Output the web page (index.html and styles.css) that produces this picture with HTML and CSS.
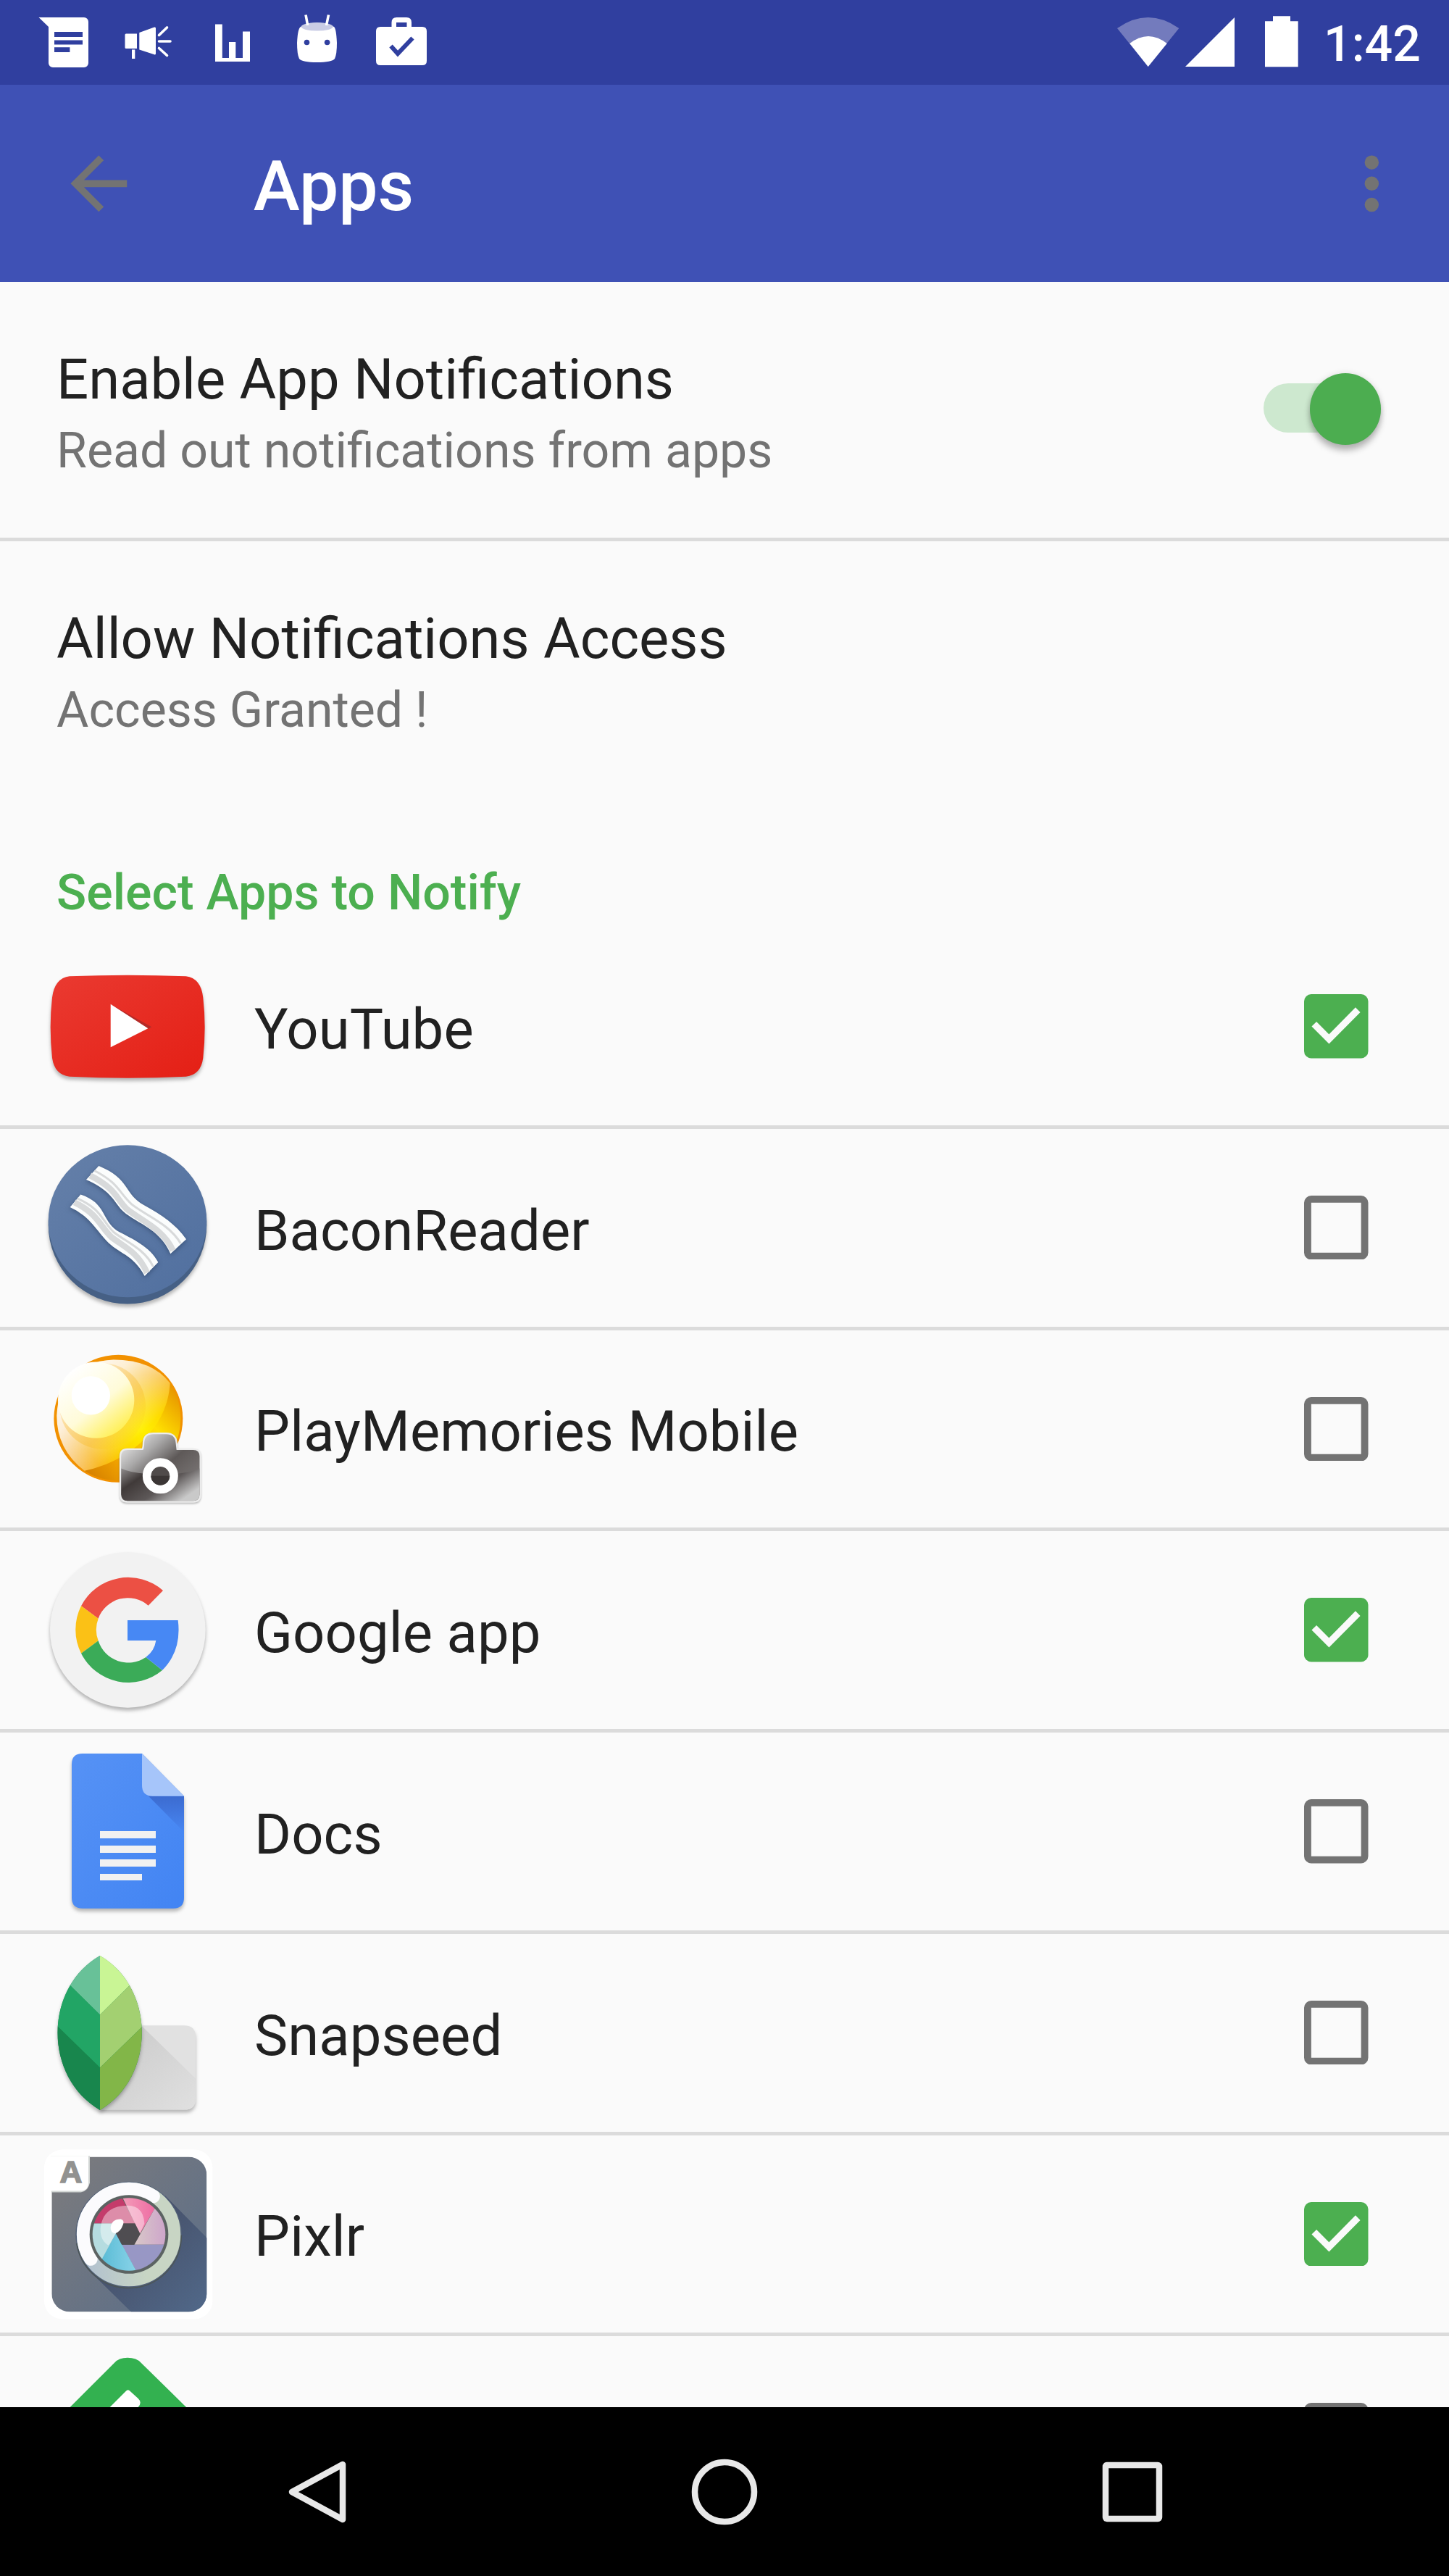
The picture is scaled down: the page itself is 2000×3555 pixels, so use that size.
FILE: index.html
```html
<!DOCTYPE html>
<html lang="en">
<head>
    <meta charset="UTF-8">
    <meta name="viewport" content="width=device-width, initial-scale=1.0">
    <title>Apps</title>
    <link rel="stylesheet" href="styles.css">
</head>
<body>
    <div class="status-bar">
        <svg class="status-left" viewBox="0 0 660 117">
            <!-- messages -->
            <path fill="#fff" d="M53.5 24H116a6 6 0 0 1 6 6V87a6 6 0 0 1-6 6H73a6 6 0 0 1-6-6V37Z"/>
            <path fill="#303f9f" d="M75 44h39v7H75zM75 55.5h39v6H75zM75 65.3h21.4v6.7H75z"/>
            <!-- megaphone -->
            <path fill="#fff" d="M174 46.5h15V67h-15q-1.5 0-1.5-1.5V48q0-1.5 1.5-1.5ZM192.3 45L213 37.5q2-.5 2 1.5V74q0 2-2 1.3L192.3 68.5ZM182 68.5h4.3V81H182Z"/>
            <path fill="none" stroke="#fff" stroke-width="3.6" stroke-linecap="round" d="M219.5 48.5L230.5 38M219.5 57H235M219.5 66.5L230.5 76.5"/>
            <!-- chart -->
            <path fill="#fff" d="M297 33.5h9.8V80h9.2V58h9.3V80h9.7V43.5h10V85H297Z"/>
            <!-- android -->
            <path fill="#fff" d="M415 37q22-11 46 0q3 2 4 22q0 16-3 22q-4 5-24.5 5t-24.5-5q-3-6-3-22q1-20 5-22Z"/>
            <ellipse cx="437.7" cy="36.8" rx="22" ry="5.8" fill="#c9cce5"/>
            <path stroke="#fff" stroke-width="3.6" d="M422 20.5l2.7 14.5M453.5 20.5L450.5 35"/>
            <circle cx="423.5" cy="58.5" r="3.8" fill="#303f9f"/>
            <circle cx="451.6" cy="58.5" r="3.8" fill="#303f9f"/>
            <!-- work -->
            <path fill="#fff" fill-rule="evenodd" d="M540.5 37V31q0-7 7-7H561q7 0 7 7v6h15q6 0 6 6V84q0 6-6 6H525q-6 0-6-6V43q0-6 6-6ZM547 31v6h14.5v-6Z"/>
            <path fill="none" stroke="#303f9f" stroke-width="6" d="M539.5 63.5L549 74L569.5 52.5"/>
        </svg>
        <div class="status-right">
            <svg class="status-icons" viewBox="0 0 260 117">
                <path fill="#737bbd" d="M2 39Q44.7 9 87.3 39L44.7 92Z"/>
                <path fill="#fff" d="M19.3 60Q45 40 70.7 60L44.7 92Z"/>
                <path fill="#fff" d="M96 92L164 24V92Z"/>
                <path fill="#fff" d="M217 22.3h24v7h10.7v63H206v-63h11Z"/>
            </svg>
            <span class="clock">1:42</span>
        </div>
    </div>

    <div class="toolbar">
        <svg class="toolbar-icon" viewBox="0 0 24 24"><path d="M20 11H7.8l5.6-5.6L12 4l-8 8 8 8 1.4-1.4L7.8 13H20z"/></svg>
        <h1>Apps</h1>
        <svg class="toolbar-icon" viewBox="0 0 24 24"><circle cx="12" cy="6" r="2"/><circle cx="12" cy="12" r="2"/><circle cx="12" cy="18" r="2"/></svg>
    </div>

    <div class="content">
        <div class="setting divided">
            <div>
                <div class="title">Enable App Notifications</div>
                <div class="summary">Read out notifications from apps</div>
            </div>
            <div class="switch"><div class="thumb"></div></div>
        </div>
        <div class="setting">
            <div>
                <div class="title">Allow Notifications Access</div>
                <div class="summary">Access Granted !</div>
            </div>
        </div>

        <h2>Select Apps to Notify</h2>

        <div class="app">
            <svg class="app-icon" viewBox="0 0 900 833">
                <defs>
                    <linearGradient id="yt" x1="0" y1="0" x2="1" y2="1"><stop offset="0" stop-color="#ea3a31"/><stop offset="1" stop-color="#e41f15"/></linearGradient>
                </defs>
                <path class="shadow" fill="url(#yt)" d="M168 202Q408 192 650 202Q712 210 721 290Q735 410 721 540Q712 610 650 617Q408 629 168 617Q106 610 96 540Q82 410 96 290Q106 210 168 202Z"/>
                <path fill="#b52b28" d="M338 318L508 412L493 420Z"/>
                <path fill="#fff" d="M338 317L493 418L338 496Z"/>
            </svg>
            <span class="title">YouTube</span>
            <svg class="checkbox" viewBox="0 0 18 18"><rect width="18" height="18" rx="2" fill="#4caf50"/><path fill="none" stroke="#fafafa" stroke-width="1.9" d="M2.8 8.4L7 12.6L15.1 4.4"/></svg>
        </div>

        <div class="app">
            <svg class="app-icon" viewBox="0 0 900 833">
                <defs>
                    <linearGradient id="bacon" x1="0" y1="0" x2="1" y2="1"><stop offset="0" stop-color="#6580a9"/><stop offset="1" stop-color="#506f9f"/></linearGradient>
                </defs>
                <g transform="translate(0 6.6)">
                    <circle class="shadow" cx="408" cy="390" r="328" fill="#466085"/>
                    <path fill="url(#bacon)" d="M80 375A328 315 0 0 1 736 375A328 315 0 0 1 80 375Z"/>
                    <g class="soft-shadow">
                        <path fill="#fbfdfd" d="M289 146C420 200 390 260 478 310C550 350 610 390 651 450L586 510C540 400 430 380 380 325C340 270 320 240 237 203Z"/>
                        <path fill="#fbfdfd" d="M214 265C320 300 300 370 365 415C430 450 500 480 535 545L479 602C430 510 370 510 320 455C270 400 250 355 170 317Z"/>
                    </g>
                    <path fill="none" stroke="#d8dadb" stroke-width="25" d="M253 186C360 240 360 280 405 325C460 370 560 410 596 497M188 297C285 345 290 390 340 440C390 480 450 500 489 589"/>
                    <path fill="none" stroke="#d8dadb" stroke-width="9" d="M271 166C375 220 370 255 425 305C480 350 580 385 628 467M200 281C300 325 300 370 350 420C400 460 480 490 514 563"/>
                </g>
            </svg>
            <span class="title">BaconReader</span>
            <svg class="checkbox" viewBox="0 0 18 18"><rect x="1" y="1" width="16" height="16" rx="1" fill="none" stroke="#737373" stroke-width="2"/></svg>
        </div>

        <div class="app">
            <svg class="app-icon" viewBox="0 0 900 833">
                <defs>
                    <radialGradient id="ball" gradientUnits="userSpaceOnUse" cx="470" cy="400" r="330"><stop offset="0" stop-color="#fff000"/><stop offset=".35" stop-color="#fdd600"/><stop offset=".7" stop-color="#f8b20d"/><stop offset="1" stop-color="#f6b040"/></radialGradient>
                    <linearGradient id="shell" x1="0" y1="0" x2="1" y2="1"><stop offset="0" stop-color="#fff"/><stop offset=".35" stop-color="#fce0a8"/><stop offset=".65" stop-color="#f8bb28" stop-opacity=".4"/><stop offset="1" stop-color="#ffe600" stop-opacity="0"/></linearGradient>
                    <linearGradient id="glow" gradientUnits="userSpaceOnUse" x1="150" y1="150" x2="440" y2="440"><stop offset="0" stop-color="#fff"/><stop offset=".4" stop-color="#fff" stop-opacity=".8"/><stop offset="1" stop-color="#fff" stop-opacity="0"/></linearGradient>
                    <linearGradient id="inner" x1=".2" y1=".1" x2=".85" y2=".9"><stop offset="0" stop-color="#fff"/><stop offset=".55" stop-color="#fffbd8"/><stop offset="1" stop-color="#ffef50"/></linearGradient>
                    <linearGradient id="under" gradientUnits="userSpaceOnUse" x1="220" y1="590" x2="630" y2="220"><stop offset="0" stop-color="#d17a00"/><stop offset=".3" stop-color="#f3a600"/><stop offset=".65" stop-color="#ffe100"/><stop offset="1" stop-color="#e48a00"/></linearGradient>
                    <linearGradient id="cam" x1="0" y1="0" x2="1" y2="1"><stop offset="0" stop-color="#fff"/><stop offset=".3" stop-color="#aaa9a9"/><stop offset=".52" stop-color="#5e5958"/><stop offset="1" stop-color="#8b8787"/></linearGradient>
                    <linearGradient id="cam2" x1="0" y1="0" x2="1" y2=".6"><stop offset="0" stop-color="#8f8c8c"/><stop offset=".3" stop-color="#403a39"/><stop offset=".65" stop-color="#5d5858"/><stop offset="1" stop-color="#c9c9c9"/></linearGradient>
                </defs>
                <g transform="translate(0 13.5)">
                    <ellipse cx="370" cy="352" rx="267" ry="264" fill="#f29100"/>
                    <path fill="url(#under)" d="M584 205Q628 270 628 352A258 256 0 0 1 230 568Q520 440 584 205Z"/>
                    <path fill="url(#ball)" d="M350 108Q510 108 584 205C575 380 430 525 230 568Q115 480 115 340Q125 120 350 108Z"/>
                    <path fill="url(#glow)" d="M350 108Q510 108 584 205C575 380 430 525 230 568Q115 480 115 340Q125 120 350 108Z"/>
                    <ellipse cx="305" cy="300" rx="178" ry="178" fill="url(#shell)"/>
                    <circle cx="278" cy="275" r="158" fill="url(#inner)"/>
                    <circle cx="256" cy="256" r="80" fill="#fff"/>
                    <path class="cam-shadow" fill="url(#cam)" stroke="#ececec" stroke-width="7" d="M408 478H470Q474 470 474 450Q477 413 515 413H568Q607 413 611 450L614 478H680Q710 478 710 508V665Q710 696 680 696H408Q378 696 378 665V508Q378 478 408 478Z"/>
                    <path fill="url(#cam2)" d="M382 558Q430 582 545 582Q660 582 706 558V665Q706 690 680 692H408Q384 690 382 665Z"/>
                    <circle cx="544" cy="589" r="56" fill="#504b4a" stroke="#fff" stroke-width="35"/>
                    <path fill="#3b3635" d="M505 589H583A39 38 0 0 1 505 589Z"/>
                </g>
            </svg>
            <span class="title">PlayMemories Mobile</span>
            <svg class="checkbox" viewBox="0 0 18 18"><rect x="1" y="1" width="16" height="16" rx="1" fill="none" stroke="#737373" stroke-width="2"/></svg>
        </div>

        <div class="app">
            <svg class="app-icon" viewBox="0 0 900 833">
                <g transform="translate(0 5)">
                    <circle class="shadow" cx="409" cy="404" r="322" fill="#f2f2f2"/>
                    <path fill="#ec5044" d="M555 241A219 219 0 0 0 216 305L287 357A130 130 0 0 1 494 303Z"/>
                    <path fill="#fbc116" d="M216 305A219 219 0 0 0 216 501L287 449A130 130 0 0 1 287 357Z"/>
                    <path fill="#3bab58" d="M216 501A219 219 0 0 0 552 571L484 517A130 130 0 0 1 287 449Z"/>
                    <path fill="#4788f4" d="M408 364H617Q633 490 552 571L484 517Q519 492 526 448H408Z"/>
                </g>
            </svg>
            <span class="title">Google app</span>
            <svg class="checkbox" viewBox="0 0 18 18"><rect width="18" height="18" rx="2" fill="#4caf50"/><path fill="none" stroke="#fafafa" stroke-width="1.9" d="M2.8 8.4L7 12.6L15.1 4.4"/></svg>
        </div>

        <div class="app">
            <svg class="app-icon" viewBox="0 0 900 833">
                <defs>
                    <linearGradient id="doc" x1="0" y1="0" x2="1" y2="1"><stop offset="0" stop-color="#5692f5"/><stop offset="1" stop-color="#4284f3"/></linearGradient>
                    <linearGradient id="fold" x1="0" y1="0" x2="0" y2="1"><stop offset="0" stop-color="#3c6bd0"/><stop offset="1" stop-color="#4786f2"/></linearGradient>
                </defs>
                <g transform="translate(0 -3)">
                    <path class="shadow" fill="url(#doc)" d="M221 90H468L642 266V687Q642 731 598 731H221Q177 731 177 687V134Q177 90 221 90Z"/>
                    <path fill="url(#fold)" d="M495 266H642V415Z"/>
                    <path fill="#a6c5fa" d="M468 90L642 266H512Q468 266 468 222Z"/>
                    <path fill="#f1f1f1" d="M294 411H525V441H294ZM294 471H525V501H294ZM294 528H525V558H294ZM294 588H468V615H294Z"/>
                </g>
            </svg>
            <span class="title">Docs</span>
            <svg class="checkbox" viewBox="0 0 18 18"><rect x="1" y="1" width="16" height="16" rx="1" fill="none" stroke="#737373" stroke-width="2"/></svg>
        </div>

        <div class="app">
            <svg class="app-icon" viewBox="0 0 900 833">
                <defs>
                    <clipPath id="leaf"><path d="M294 86C525 220 525 590 294 725C60 590 60 220 294 86Z"/></clipPath>
                    <linearGradient id="cast" x1="0" y1="0" x2="1" y2="1"><stop offset="0" stop-color="#c8c8c8"/><stop offset="1" stop-color="#e0e0e0"/></linearGradient>
                </defs>
                <g transform="translate(0 3.6)">
                    <path class="shadow" fill="#e1e1e1" d="M294 375H643Q690 375 690 422V677Q690 724 643 724H294Z"/>
                    <path fill="url(#cast)" d="M468 378L690 595V677Q690 724 643 724H294Z"/>
                    <path class="shadow" fill="#1f8a50" d="M294 86C525 220 525 590 294 725C60 590 60 220 294 86Z"/>
                    <g clip-path="url(#leaf)">
                        <path fill="#68c198" d="M100 80H294V331L172 211L100 140Z"/>
                        <path fill="#22a565" d="M100 139L294 331V550L100 361Z"/>
                        <path fill="#18864d" d="M100 361L294 550V740H100Z"/>
                        <path fill="#c9f595" d="M294 80H500V127L294 331Z"/>
                        <path fill="#a3d071" d="M500 127L294 331V550L500 350Z"/>
                        <path fill="#82b648" d="M500 350L294 550V740H500Z"/>
                    </g>
                </g>
            </svg>
            <span class="title">Snapseed</span>
            <svg class="checkbox" viewBox="0 0 18 18"><rect x="1" y="1" width="16" height="16" rx="1" fill="none" stroke="#737373" stroke-width="2"/></svg>
        </div>

        <div class="app">
            <svg class="app-icon" viewBox="0 0 900 833">
                <defs>
                    <linearGradient id="slate" x1="0" y1="0" x2="1" y2="1"><stop offset=".1" stop-color="#797a7e"/><stop offset="1" stop-color="#596d89"/></linearGradient>
                    <linearGradient id="long" x1="0" y1="0" x2="1" y2="1"><stop offset=".3" stop-color="#465069"/><stop offset="1" stop-color="#51698a"/></linearGradient>
                    <linearGradient id="ring" x1="0" y1="0" x2="1" y2="0"><stop offset="0" stop-color="#b0c0d0"/><stop offset=".7" stop-color="#c8d5c4"/></linearGradient>
                    <clipPath id="card"><rect x="94" y="108" width="642" height="642" rx="75"/></clipPath>
                    <clipPath id="lens"><circle cx="414" cy="429" r="151"/></clipPath>
                    <linearGradient id="teal" x1="0" y1="0" x2="1" y2="0"><stop offset="0" stop-color="#4db5d0"/><stop offset="1" stop-color="#8dd5ea"/></linearGradient>
                    <linearGradient id="pink" x1="0" y1="0" x2="1" y2="0"><stop offset="0" stop-color="#f4a2bb"/><stop offset="1" stop-color="#ec5b9b"/></linearGradient>
                    <linearGradient id="lilac" x1="0" y1="0" x2="1" y2="0"><stop offset="0" stop-color="#d8c8c8"/><stop offset="1" stop-color="#cb9ccb"/></linearGradient>
                </defs>
                <g transform="translate(0 -19.5)">
                    <rect x="63" y="78" width="697" height="702" rx="75" fill="#fff"/>
                    <g clip-path="url(#card)">
                        <rect x="94" y="108" width="642" height="642" fill="url(#slate)"/>
                        <path fill="url(#long)" d="M565 270L750 457V750H423L255 585Z"/>
                    </g>
                    <path fill="#d3d7d5" d="M90 104H252V215Q245 250 215 255H94Z"/>
                    <path fill="#fff" d="M90 104H246V215Q246 249 212 249H90Z"/>
                    <text x="174" y="215" class="brand" text-anchor="middle">A</text>
                    <circle cx="413" cy="431" r="220" fill="#526077"/>
                    <circle cx="413" cy="433" r="218" fill="none" stroke="#4b5557" stroke-width="5" stroke-dasharray="650 2000"/>
                    <circle cx="413" cy="429" r="187" fill="none" stroke="url(#ring)" stroke-width="56"/>
                    <path fill="none" stroke="#fbfbfd" stroke-width="56" stroke-linecap="round" d="M256 531A187 187 0 0 1 514.500 272"/>
                    <circle cx="414" cy="429" r="163" fill="#5c6362"/>
                    <g clip-path="url(#lens)">
                        <path fill="#c43c6b" d="M200 384V250H370L440 384Z"/>
                        <path fill="url(#pink)" d="M370 240H570L460 425L439 384Z"/>
                        <path fill="url(#lilac)" d="M522 320L600 300V472H436Z"/>
                        <path fill="#9897c5" d="M384 472H600V600H455Z"/>
                        <path fill="url(#teal)" d="M360 425L455 600H260Z"/>
                        <path fill="#b5dce0" d="M220 384H386L360 425L270 590H220Z"/>
                        <path fill="#fff" fill-opacity=".42" d="M386 384L360 425L330 475Q294 455 296 405Q305 310 410 310Q475 312 478 385L460 425L439 384Z"/>
                    </g>
                    <path fill="#4f4d51" d="M386 384H439L460 428L436 472H384L360 425Z"/>
                    <path fill="#fff" d="M338 402Q342 365 380 366Q396 370 390 388Q378 422 355 425Q338 421 338 402Z"/>
                </g>
            </svg>
            <span class="title">Pixlr</span>
            <svg class="checkbox" viewBox="0 0 18 18"><rect width="18" height="18" rx="2" fill="#4caf50"/><path fill="none" stroke="#fafafa" stroke-width="1.9" d="M2.8 8.4L7 12.6L15.1 4.4"/></svg>
        </div>

        <div class="app">
            <svg class="app-icon" viewBox="0 0 900 833">
                <path fill="#33b150" d="M354 110Q372 89 408 89Q446 89 464 110L800 440H24Z"/>
                <path fill="#fff" d="M401 228Q410 218 419 228L452 258Q470 275 452 294L400 346H283Z"/>
            </svg>
            <span class="title"></span>
            <svg class="checkbox" viewBox="0 0 18 18"><rect x="1" y="1" width="16" height="16" rx="1" fill="none" stroke="#737373" stroke-width="2"/></svg>
        </div>
    </div>

    <div class="nav-bar">
        <svg viewBox="0 0 120 120"><path d="M96 22V98L26 60Z"/></svg>
        <svg viewBox="0 0 120 120"><circle cx="60" cy="60" r="41"/></svg>
        <svg viewBox="0 0 120 120"><rect x="23" y="23" width="74" height="74" rx="2"/></svg>
    </div>
</body>
</html>
```
FILE: styles.css
```css
* {
    box-sizing: border-box;
}

body {
    margin: 0;
    width: 2000px;
    height: 3555px;
    display: flex;
    flex-direction: column;
    overflow: hidden;
    background: #fafafa;
    color: #212121;
    font-family: Roboto, sans-serif;
}

svg {
    display: block;
    flex: none;
}

.status-bar {
    flex: none;
    height: 117px;
    display: flex;
    justify-content: space-between;
    background: #303f9f;
}

.status-left {
    width: 660px;
    height: 117px;
}

.status-right {
    display: flex;
    width: 460px;
}

.status-icons {
    width: 260px;
    height: 117px;
}

.clock {
    margin-left: 27px;
    padding-top: 21px;
    color: #fff;
    font-size: 68.06px;
    font-weight: 500;
    line-height: 81px;
}

.toolbar {
    flex: none;
    height: 272px;
    padding: 0 48.5px 0 78px;
    display: flex;
    align-items: center;
    background: #3f51b5;
}

.toolbar-icon {
    width: 116.7px;
    height: 116.7px;
    fill: #737373;
}

h1 {
    flex: 1;
    margin: 0 0 0 155px;
    padding-top: 7px;
    color: #fff;
    font-size: 96.6px;
    font-weight: 500;
    line-height: 114px;
}

.content {
    flex: none;
    height: 2933px;
    overflow: hidden;
}

.setting {
    height: 353px;
    padding: 89px 94px 0 78px;
    display: flex;
    justify-content: space-between;
}

.divided {
    height: 358px;
    border-bottom: 5px solid #dbdbdb;
}

.title {
    font-size: 77.78px;
    line-height: 92px;
}

.summary {
    margin-top: 12px;
    color: #737373;
    font-size: 68.06px;
    line-height: 80px;
}

.switch {
    width: 162px;
    height: 68px;
    margin-top: 51px;
    display: flex;
    align-items: center;
    justify-content: flex-end;
    border-radius: 34px;
    background: linear-gradient(90deg, #cde8cf 110px, transparent 110px);
}

.thumb {
    width: 98.5px;
    height: 98.5px;
    margin-top: 3px;
    flex: none;
    border-radius: 50%;
    background: #4cad50;
    box-shadow: 0 8px 9px rgba(0, 0, 0, 0.25), 0 0 8px rgba(0, 0, 0, 0.12);
}

h2 {
    height: 180px;
    margin: 0;
    padding: 92px 78px 0;
    color: #4caf50;
    font-size: 68.06px;
    font-weight: 500;
    line-height: 80px;
}

.app {
    height: 277.75px;
    padding: 0 111.5px 0 40px;
    display: flex;
    align-items: center;
    border-bottom: 5px solid #dbdbdb;
}

.app-icon {
    width: 300px;
    height: 277.7px;
    align-self: flex-start;
}

.app .title {
    flex: 1;
    margin-left: 11px;
    padding-top: 9px;
    letter-spacing: 0.1px;
}

.checkbox {
    width: 88.5px;
    height: 88.5px;
}

.shadow {
    filter: drop-shadow(0 12px 8px rgba(0, 0, 0, 0.28));
}

.soft-shadow {
    filter: drop-shadow(0 6px 10px rgba(30, 50, 80, 0.5));
}

.cam-shadow {
    filter: drop-shadow(0 5px 3px rgba(0, 0, 0, 0.25));
}

.brand {
    fill: #929290;
    stroke: #929290;
    stroke-width: 5px;
    font: bold 128px "Liberation Sans", sans-serif;
}

.nav-bar {
    flex: none;
    height: 233px;
    padding: 0 377px;
    display: flex;
    align-items: center;
    justify-content: space-between;
    background: #000;
}

.nav-bar svg {
    width: 120px;
    height: 120px;
    fill: none;
    stroke: #e8e8e8;
    stroke-width: 8.5;
    stroke-linejoin: round;
}
```
